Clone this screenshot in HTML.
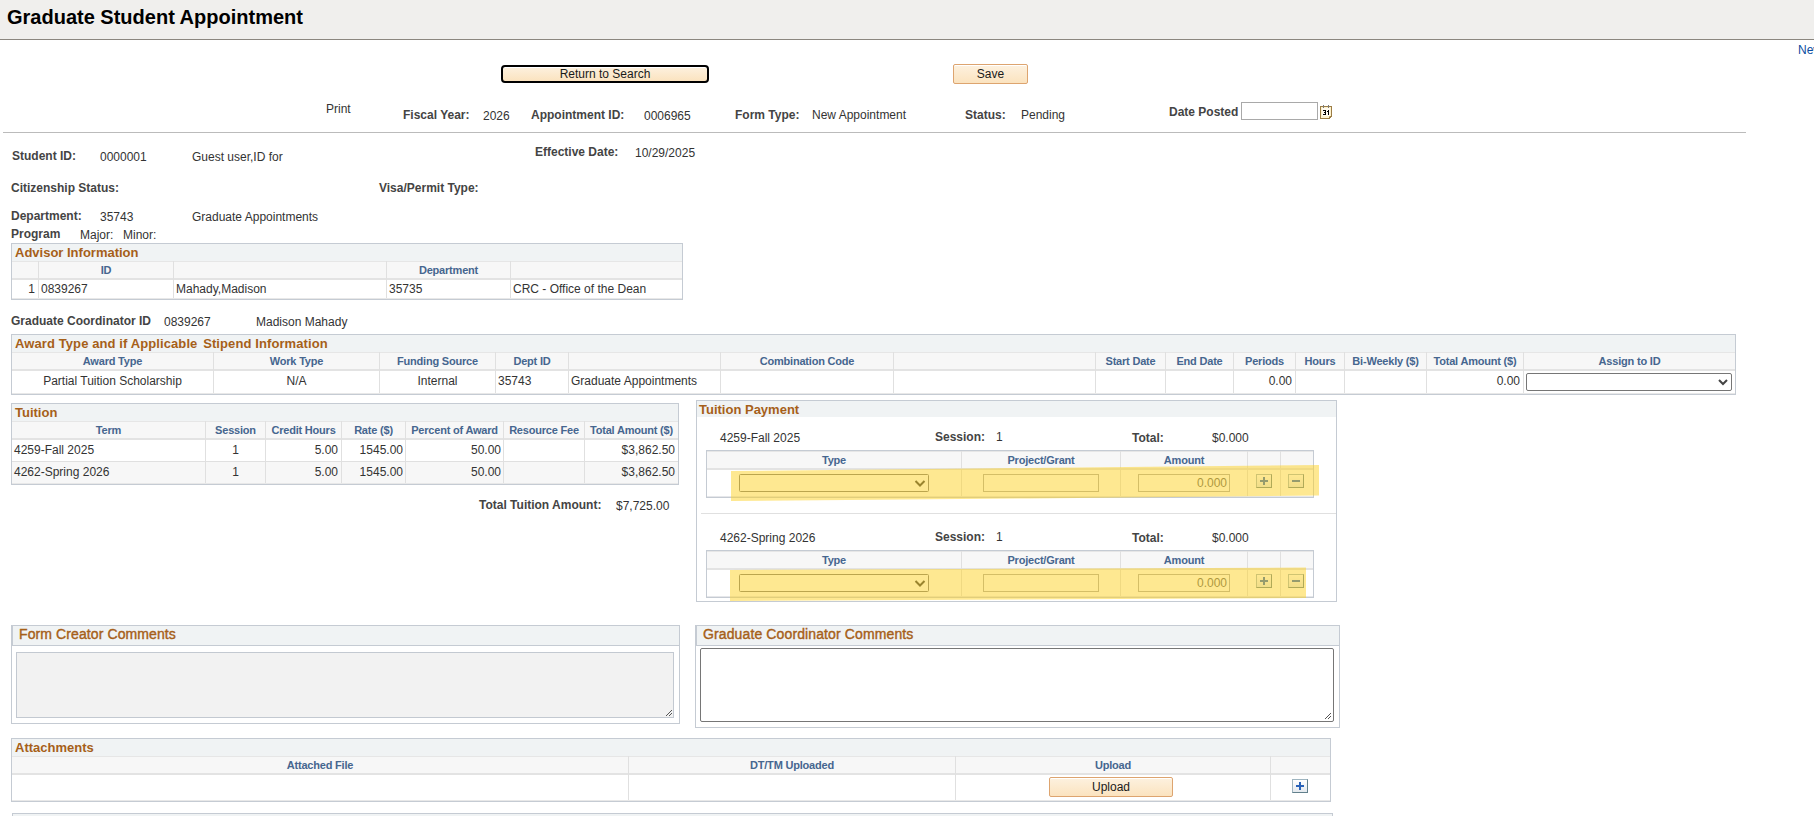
<!DOCTYPE html>
<html><head><meta charset="utf-8">
<style>
*{box-sizing:border-box;margin:0;padding:0}
html,body{width:1814px;height:816px;overflow:hidden;background:#fff}
body{position:relative;font-family:"Liberation Sans",sans-serif;font-size:12px;color:#333}
.a{position:absolute;white-space:nowrap;line-height:14px}
.p{position:absolute}
.btn{position:absolute;border:1px solid #dda46f;border-radius:2px;box-shadow:inset 0 1px 0 #fff;background:linear-gradient(#fdf1df,#fbe3bf);color:#1a1a1a;text-align:center;white-space:nowrap}
</style></head><body>

<div class="p" style="left:0px;top:0px;width:1814px;height:39px;background:#f0efed;"></div>
<div class="p" style="left:0px;top:39px;width:1814px;height:1px;background:#8b867f;"></div>
<div class="a" style="left:7px;top:5px;line-height:24px;font-size:20px;font-weight:bold;color:#000;">Graduate Student Appointment</div>
<div class="a" style="left:1798px;top:43px;line-height:14px;color:#0a4ca0;">New</div>
<div class="btn" style="left:501px;top:65px;width:208px;height:18px;border:2px solid #000;border-radius:4px;line-height:15px">Return to Search</div>
<div class="btn" style="left:953px;top:64px;width:75px;height:20px;line-height:18px">Save</div>
<div class="a" style="left:326px;top:102px;line-height:14px;">Print</div>
<div class="a" style="left:403px;top:108px;line-height:14px;font-weight:bold;color:#444;">Fiscal Year:</div>
<div class="a" style="left:483px;top:109px;line-height:14px;">2026</div>
<div class="a" style="left:531px;top:108px;line-height:14px;font-weight:bold;color:#444;">Appointment ID:</div>
<div class="a" style="left:644px;top:109px;line-height:14px;">0006965</div>
<div class="a" style="left:735px;top:108px;line-height:14px;font-weight:bold;color:#444;">Form Type:</div>
<div class="a" style="left:812px;top:108px;line-height:14px;">New Appointment</div>
<div class="a" style="left:965px;top:108px;line-height:14px;font-weight:bold;color:#444;">Status:</div>
<div class="a" style="left:1021px;top:108px;line-height:14px;">Pending</div>
<div class="a" style="left:1169px;top:105px;line-height:14px;font-weight:bold;color:#444;">Date Posted</div>
<div class="p" style="left:1241px;top:102px;width:77px;height:18px;background:#fff;border:1px solid #a9a9a9;"></div>
<svg class="p" style="left:1320px;top:105px" width="12" height="14" viewBox="0 0 12 14" shape-rendering="crispEdges">
<path d="M0 1h12v11h-1v1h-1v1h-10z" fill="#9c7d45"/>
<path d="M1 2h10v9h-2v2h-8z" fill="#fdf1cc"/>
<rect x="2" y="3" width="8" height="8" fill="#fffaf0"/>
<rect x="3" y="0" width="1" height="3" fill="#7a7a7a"/><rect x="8" y="0" width="1" height="3" fill="#7a7a7a"/>
<rect x="3" y="5" width="3" height="1" fill="#000"/><rect x="5" y="6" width="1" height="1" fill="#000"/><rect x="4" y="7" width="2" height="1" fill="#000"/><rect x="5" y="8" width="1" height="1" fill="#000"/><rect x="3" y="9" width="3" height="1" fill="#000"/>
<rect x="8" y="5" width="1" height="5" fill="#000"/><rect x="7" y="6" width="1" height="1" fill="#000"/>
<rect x="9" y="11" width="1" height="1" fill="#c9b27a"/>
</svg>
<div class="p" style="left:3px;top:132px;width:1743px;height:1px;background:#bbbbbb;"></div>
<div class="a" style="left:12px;top:149px;line-height:14px;font-weight:bold;color:#444;">Student ID:</div>
<div class="a" style="left:100px;top:150px;line-height:14px;">0000001</div>
<div class="a" style="left:192px;top:150px;line-height:14px;">Guest user,ID for</div>
<div class="a" style="left:535px;top:145px;line-height:14px;font-weight:bold;color:#444;">Effective Date:</div>
<div class="a" style="left:635px;top:146px;line-height:14px;">10/29/2025</div>
<div class="a" style="left:11px;top:181px;line-height:14px;font-weight:bold;color:#444;">Citizenship Status:</div>
<div class="a" style="left:379px;top:181px;line-height:14px;font-weight:bold;color:#444;">Visa/Permit Type:</div>
<div class="a" style="left:11px;top:209px;line-height:14px;font-weight:bold;color:#444;">Department:</div>
<div class="a" style="left:100px;top:210px;line-height:14px;">35743</div>
<div class="a" style="left:192px;top:210px;line-height:14px;">Graduate Appointments</div>
<div class="a" style="left:11px;top:227px;line-height:14px;font-weight:bold;color:#444;">Program</div>
<div class="a" style="left:80px;top:228px;line-height:14px;">Major:</div>
<div class="a" style="left:123px;top:228px;line-height:14px;">Minor:</div>
<div class="p" style="left:11px;top:243px;width:672px;height:57px;background:#fff;border:1px solid #c5cbd3;"></div>
<div class="p" style="left:12px;top:244px;width:670px;height:17px;background:#f0f3f4;"></div>
<div class="a" style="left:15px;top:245px;line-height:15px;font-size:13px;font-weight:bold;color:#a65f19;">Advisor Information</div>
<div class="p" style="left:12px;top:261px;width:670px;height:17px;background:#f7f7f7;"></div>
<div class="p" style="left:12px;top:261px;width:670px;height:1px;background:#e6e6e6;"></div>
<div class="p" style="left:12px;top:278px;width:670px;height:2px;background:#e3e3e3;"></div>
<div class="p" style="left:12px;top:298px;width:670px;height:1px;background:#e8e8e8;"></div>
<div class="p" style="left:38px;top:261px;width:1px;height:37px;background:#e0e0e0;"></div>
<div class="p" style="left:173px;top:261px;width:1px;height:37px;background:#e0e0e0;"></div>
<div class="p" style="left:386px;top:261px;width:1px;height:37px;background:#e0e0e0;"></div>
<div class="p" style="left:510px;top:261px;width:1px;height:37px;background:#e0e0e0;"></div>
<div class="a" style="left:39px;top:263px;line-height:14px;font-size:11px;font-weight:bold;color:#46668f;width:134px;text-align:center;letter-spacing:-0.2px;">ID</div>
<div class="a" style="left:387px;top:263px;line-height:14px;font-size:11px;font-weight:bold;color:#46668f;width:123px;text-align:center;letter-spacing:-0.2px;">Department</div>
<div class="a" style="left:12px;top:282px;line-height:14px;width:23px;text-align:right;">1</div>
<div class="a" style="left:41px;top:282px;line-height:14px;">0839267</div>
<div class="a" style="left:176px;top:282px;line-height:14px;">Mahady,Madison</div>
<div class="a" style="left:389px;top:282px;line-height:14px;">35735</div>
<div class="a" style="left:513px;top:282px;line-height:14px;">CRC - Office of the Dean</div>
<div class="a" style="left:11px;top:314px;line-height:14px;font-weight:bold;color:#444;">Graduate Coordinator ID</div>
<div class="a" style="left:164px;top:315px;line-height:14px;">0839267</div>
<div class="a" style="left:256px;top:315px;line-height:14px;">Madison Mahady</div>
<div class="p" style="left:11px;top:334px;width:1725px;height:61px;background:#fff;border:1px solid #c5cbd3;"></div>
<div class="p" style="left:12px;top:335px;width:1723px;height:17px;background:#f0f3f4;"></div>
<div class="a" style="left:15px;top:336px;line-height:15px;font-size:13px;font-weight:bold;color:#a65f19;"><span style="letter-spacing:0.1px">Award Type and if Applicable <span style="margin-left:2px">Stipend Information</span></span></div>
<div class="p" style="left:12px;top:352px;width:1723px;height:17px;background:#f7f7f7;"></div>
<div class="p" style="left:12px;top:352px;width:1723px;height:1px;background:#e6e6e6;"></div>
<div class="p" style="left:12px;top:369px;width:1723px;height:2px;background:#e3e3e3;"></div>
<div class="p" style="left:12px;top:393px;width:1723px;height:1px;background:#e8e8e8;"></div>
<div class="p" style="left:213px;top:352px;width:1px;height:41px;background:#e0e0e0;"></div>
<div class="p" style="left:379px;top:352px;width:1px;height:41px;background:#e0e0e0;"></div>
<div class="p" style="left:495px;top:352px;width:1px;height:41px;background:#e0e0e0;"></div>
<div class="p" style="left:568px;top:352px;width:1px;height:41px;background:#e0e0e0;"></div>
<div class="p" style="left:720px;top:352px;width:1px;height:41px;background:#e0e0e0;"></div>
<div class="p" style="left:893px;top:352px;width:1px;height:41px;background:#e0e0e0;"></div>
<div class="p" style="left:1095px;top:352px;width:1px;height:41px;background:#e0e0e0;"></div>
<div class="p" style="left:1165px;top:352px;width:1px;height:41px;background:#e0e0e0;"></div>
<div class="p" style="left:1233px;top:352px;width:1px;height:41px;background:#e0e0e0;"></div>
<div class="p" style="left:1295px;top:352px;width:1px;height:41px;background:#e0e0e0;"></div>
<div class="p" style="left:1344px;top:352px;width:1px;height:41px;background:#e0e0e0;"></div>
<div class="p" style="left:1426px;top:352px;width:1px;height:41px;background:#e0e0e0;"></div>
<div class="p" style="left:1523px;top:352px;width:1px;height:41px;background:#e0e0e0;"></div>
<div class="a" style="left:12px;top:354px;line-height:14px;font-size:11px;font-weight:bold;color:#46668f;width:201px;text-align:center;letter-spacing:-0.2px;">Award Type</div>
<div class="a" style="left:214px;top:354px;line-height:14px;font-size:11px;font-weight:bold;color:#46668f;width:165px;text-align:center;letter-spacing:-0.2px;">Work Type</div>
<div class="a" style="left:380px;top:354px;line-height:14px;font-size:11px;font-weight:bold;color:#46668f;width:115px;text-align:center;letter-spacing:-0.2px;">Funding Source</div>
<div class="a" style="left:496px;top:354px;line-height:14px;font-size:11px;font-weight:bold;color:#46668f;width:72px;text-align:center;letter-spacing:-0.2px;">Dept ID</div>
<div class="a" style="left:721px;top:354px;line-height:14px;font-size:11px;font-weight:bold;color:#46668f;width:172px;text-align:center;letter-spacing:-0.2px;">Combination Code</div>
<div class="a" style="left:1096px;top:354px;line-height:14px;font-size:11px;font-weight:bold;color:#46668f;width:69px;text-align:center;letter-spacing:-0.2px;">Start Date</div>
<div class="a" style="left:1166px;top:354px;line-height:14px;font-size:11px;font-weight:bold;color:#46668f;width:67px;text-align:center;letter-spacing:-0.2px;">End Date</div>
<div class="a" style="left:1234px;top:354px;line-height:14px;font-size:11px;font-weight:bold;color:#46668f;width:61px;text-align:center;letter-spacing:-0.2px;">Periods</div>
<div class="a" style="left:1296px;top:354px;line-height:14px;font-size:11px;font-weight:bold;color:#46668f;width:48px;text-align:center;letter-spacing:-0.2px;">Hours</div>
<div class="a" style="left:1345px;top:354px;line-height:14px;font-size:11px;font-weight:bold;color:#46668f;width:81px;text-align:center;letter-spacing:-0.2px;">Bi-Weekly ($)</div>
<div class="a" style="left:1427px;top:354px;line-height:14px;font-size:11px;font-weight:bold;color:#46668f;width:96px;text-align:center;letter-spacing:-0.2px;">Total Amount ($)</div>
<div class="a" style="left:1524px;top:354px;line-height:14px;font-size:11px;font-weight:bold;color:#46668f;width:211px;text-align:center;letter-spacing:-0.2px;">Assign to ID</div>
<div class="a" style="left:12px;top:374px;line-height:14px;width:201px;text-align:center;">Partial Tuition Scholarship</div>
<div class="a" style="left:214px;top:374px;line-height:14px;width:165px;text-align:center;">N/A</div>
<div class="a" style="left:380px;top:374px;line-height:14px;width:115px;text-align:center;">Internal</div>
<div class="a" style="left:498px;top:374px;line-height:14px;">35743</div>
<div class="a" style="left:571px;top:374px;line-height:14px;">Graduate Appointments</div>
<div class="a" style="left:1234px;top:374px;line-height:14px;width:58px;text-align:right;">0.00</div>
<div class="a" style="left:1427px;top:374px;line-height:14px;width:93px;text-align:right;">0.00</div>
<div class="p" style="left:1526px;top:373px;width:206px;height:18px;background:#fff;border:1px solid #767676;border-radius:2px;"></div>
<svg class="p" style="left:1717px;top:377px" width="12" height="9" viewBox="0 0 12 9"><path d="M2 3l4 4 4-4" fill="none" stroke="#444" stroke-width="2"/></svg>
<div class="p" style="left:11px;top:403px;width:668px;height:82px;background:#fff;border:1px solid #c5cbd3;"></div>
<div class="p" style="left:12px;top:404px;width:666px;height:17px;background:#f0f3f4;"></div>
<div class="a" style="left:15px;top:405px;line-height:15px;font-size:13px;font-weight:bold;color:#a65f19;">Tuition</div>
<div class="p" style="left:12px;top:421px;width:666px;height:17px;background:#f7f7f7;"></div>
<div class="p" style="left:12px;top:421px;width:666px;height:1px;background:#e6e6e6;"></div>
<div class="p" style="left:12px;top:438px;width:666px;height:2px;background:#e3e3e3;"></div>
<div class="p" style="left:12px;top:462px;width:666px;height:21px;background:#f7f7f7;"></div>
<div class="p" style="left:12px;top:483px;width:666px;height:1px;background:#e8e8e8;"></div>
<div class="p" style="left:205px;top:421px;width:1px;height:62px;background:#e0e0e0;"></div>
<div class="p" style="left:265px;top:421px;width:1px;height:62px;background:#e0e0e0;"></div>
<div class="p" style="left:341px;top:421px;width:1px;height:62px;background:#e0e0e0;"></div>
<div class="p" style="left:405px;top:421px;width:1px;height:62px;background:#e0e0e0;"></div>
<div class="p" style="left:503px;top:421px;width:1px;height:62px;background:#e0e0e0;"></div>
<div class="p" style="left:584px;top:421px;width:1px;height:62px;background:#e0e0e0;"></div>
<div class="a" style="left:12px;top:423px;line-height:14px;font-size:11px;font-weight:bold;color:#46668f;width:193px;text-align:center;letter-spacing:-0.2px;">Term</div>
<div class="a" style="left:206px;top:423px;line-height:14px;font-size:11px;font-weight:bold;color:#46668f;width:59px;text-align:center;letter-spacing:-0.2px;">Session</div>
<div class="a" style="left:266px;top:423px;line-height:14px;font-size:11px;font-weight:bold;color:#46668f;width:75px;text-align:center;letter-spacing:-0.2px;">Credit Hours</div>
<div class="a" style="left:342px;top:423px;line-height:14px;font-size:11px;font-weight:bold;color:#46668f;width:63px;text-align:center;letter-spacing:-0.2px;">Rate ($)</div>
<div class="a" style="left:406px;top:423px;line-height:14px;font-size:11px;font-weight:bold;color:#46668f;width:97px;text-align:center;letter-spacing:-0.2px;">Percent of Award</div>
<div class="a" style="left:504px;top:423px;line-height:14px;font-size:11px;font-weight:bold;color:#46668f;width:80px;text-align:center;letter-spacing:-0.2px;">Resource Fee</div>
<div class="a" style="left:585px;top:423px;line-height:14px;font-size:11px;font-weight:bold;color:#46668f;width:93px;text-align:center;letter-spacing:-0.2px;">Total Amount ($)</div>
<div class="p" style="left:12px;top:461px;width:666px;height:1px;background:#e0e0e0;"></div>
<div class="a" style="left:14px;top:443px;line-height:14px;">4259-Fall 2025</div>
<div class="a" style="left:206px;top:443px;line-height:14px;width:59px;text-align:center;">1</div>
<div class="a" style="left:266px;top:443px;line-height:14px;width:72px;text-align:right;">5.00</div>
<div class="a" style="left:342px;top:443px;line-height:14px;width:61px;text-align:right;">1545.00</div>
<div class="a" style="left:406px;top:443px;line-height:14px;width:95px;text-align:right;">50.00</div>
<div class="a" style="left:585px;top:443px;line-height:14px;width:90px;text-align:right;">$3,862.50</div>
<div class="a" style="left:14px;top:465px;line-height:14px;">4262-Spring 2026</div>
<div class="a" style="left:206px;top:465px;line-height:14px;width:59px;text-align:center;">1</div>
<div class="a" style="left:266px;top:465px;line-height:14px;width:72px;text-align:right;">5.00</div>
<div class="a" style="left:342px;top:465px;line-height:14px;width:61px;text-align:right;">1545.00</div>
<div class="a" style="left:406px;top:465px;line-height:14px;width:95px;text-align:right;">50.00</div>
<div class="a" style="left:585px;top:465px;line-height:14px;width:90px;text-align:right;">$3,862.50</div>
<div class="a" style="left:479px;top:498px;line-height:14px;font-weight:bold;color:#444;">Total Tuition Amount:</div>
<div class="a" style="left:616px;top:499px;line-height:14px;">$7,725.00</div>
<div class="p" style="left:696px;top:400px;width:641px;height:202px;background:#fff;border:1px solid #c5cbd3;"></div>
<div class="p" style="left:697px;top:401px;width:639px;height:16px;background:#f0f3f4;"></div>
<div class="a" style="left:699px;top:402px;line-height:15px;font-size:13px;font-weight:bold;color:#a65f19;">Tuition Payment</div>
<div class="p" style="left:701px;top:513px;width:635px;height:1px;background:#e0e0e0;"></div>
<div class="a" style="left:720px;top:431px;line-height:14px;">4259-Fall 2025</div>
<div class="a" style="left:935px;top:430px;line-height:14px;font-weight:bold;color:#444;">Session:</div>
<div class="a" style="left:996px;top:430px;line-height:14px;">1</div>
<div class="a" style="left:1132px;top:431px;line-height:14px;font-weight:bold;color:#444;">Total:</div>
<div class="a" style="left:1212px;top:431px;line-height:14px;">$0.000</div>
<div class="p" style="left:706px;top:450px;width:608px;height:48px;background:#fff;border:1px solid #c5cbd3;"></div>
<div class="p" style="left:707px;top:451px;width:606px;height:17px;background:#f7f7f7;"></div>
<div class="p" style="left:707px;top:451px;width:606px;height:1px;background:#e6e6e6;"></div>
<div class="p" style="left:707px;top:468px;width:606px;height:2px;background:#e3e3e3;"></div>
<div class="p" style="left:707px;top:496px;width:606px;height:1px;background:#e6e7ea;"></div>
<div class="p" style="left:961px;top:451px;width:1px;height:45px;background:#e0e0e0;"></div>
<div class="p" style="left:1120px;top:451px;width:1px;height:45px;background:#e0e0e0;"></div>
<div class="p" style="left:1247px;top:451px;width:1px;height:45px;background:#e0e0e0;"></div>
<div class="p" style="left:1280px;top:451px;width:1px;height:45px;background:#e0e0e0;"></div>
<div class="a" style="left:707px;top:453px;line-height:14px;font-size:11px;font-weight:bold;color:#46668f;width:254px;text-align:center;letter-spacing:-0.2px;">Type</div>
<div class="a" style="left:962px;top:453px;line-height:14px;font-size:11px;font-weight:bold;color:#46668f;width:158px;text-align:center;letter-spacing:-0.2px;">Project/Grant</div>
<div class="a" style="left:1121px;top:453px;line-height:14px;font-size:11px;font-weight:bold;color:#46668f;width:126px;text-align:center;letter-spacing:-0.2px;">Amount</div>
<div class="p" style="left:739px;top:474px;width:190px;height:18px;background:#fff;border:1px solid #767676;border-radius:1.5px;"></div>
<svg class="p" style="left:914px;top:479px" width="12" height="9" viewBox="0 0 12 9"><path d="M1.5 2l4.5 4.5 4.5-4.5" fill="none" stroke="#333" stroke-width="2"/></svg>
<div class="p" style="left:983px;top:474px;width:116px;height:18px;background:#fff;border:1px solid #a9a9a9;"></div>
<div class="p" style="left:1138px;top:474px;width:92px;height:18px;background:#fff;border:1px solid #a9a9a9;"></div>
<div class="a" style="left:1140px;top:476px;line-height:14px;color:#5a5a5a;width:87px;text-align:right;">0.000</div>
<div class="p" style="left:1256px;top:474px;width:16px;height:14px;background:linear-gradient(#ffffff,#e4e9ee);border-style:solid;border-width:1px;border-color:#9fb5c0 #62808c #62808c #9fb5c0;"></div>
<div class="p" style="left:1260px;top:480px;width:8px;height:2px;background:#2a62b8;"></div>
<div class="p" style="left:1263px;top:477px;width:2px;height:8px;background:#2a62b8;"></div>
<div class="p" style="left:1288px;top:474px;width:16px;height:14px;background:linear-gradient(#ffffff,#e4e9ee);border-style:solid;border-width:1px;border-color:#9fb5c0 #62808c #62808c #9fb5c0;"></div>
<div class="p" style="left:1292px;top:480px;width:8px;height:2px;background:#2a62b8;"></div>
<div class="a" style="left:720px;top:531px;line-height:14px;">4262-Spring 2026</div>
<div class="a" style="left:935px;top:530px;line-height:14px;font-weight:bold;color:#444;">Session:</div>
<div class="a" style="left:996px;top:530px;line-height:14px;">1</div>
<div class="a" style="left:1132px;top:531px;line-height:14px;font-weight:bold;color:#444;">Total:</div>
<div class="a" style="left:1212px;top:531px;line-height:14px;">$0.000</div>
<div class="p" style="left:706px;top:550px;width:608px;height:48px;background:#fff;border:1px solid #c5cbd3;"></div>
<div class="p" style="left:707px;top:551px;width:606px;height:17px;background:#f7f7f7;"></div>
<div class="p" style="left:707px;top:551px;width:606px;height:1px;background:#e6e6e6;"></div>
<div class="p" style="left:707px;top:568px;width:606px;height:2px;background:#e3e3e3;"></div>
<div class="p" style="left:707px;top:596px;width:606px;height:1px;background:#e6e7ea;"></div>
<div class="p" style="left:961px;top:551px;width:1px;height:45px;background:#e0e0e0;"></div>
<div class="p" style="left:1120px;top:551px;width:1px;height:45px;background:#e0e0e0;"></div>
<div class="p" style="left:1247px;top:551px;width:1px;height:45px;background:#e0e0e0;"></div>
<div class="p" style="left:1280px;top:551px;width:1px;height:45px;background:#e0e0e0;"></div>
<div class="a" style="left:707px;top:553px;line-height:14px;font-size:11px;font-weight:bold;color:#46668f;width:254px;text-align:center;letter-spacing:-0.2px;">Type</div>
<div class="a" style="left:962px;top:553px;line-height:14px;font-size:11px;font-weight:bold;color:#46668f;width:158px;text-align:center;letter-spacing:-0.2px;">Project/Grant</div>
<div class="a" style="left:1121px;top:553px;line-height:14px;font-size:11px;font-weight:bold;color:#46668f;width:126px;text-align:center;letter-spacing:-0.2px;">Amount</div>
<div class="p" style="left:739px;top:574px;width:190px;height:18px;background:#fff;border:1px solid #767676;border-radius:1.5px;"></div>
<svg class="p" style="left:914px;top:579px" width="12" height="9" viewBox="0 0 12 9"><path d="M1.5 2l4.5 4.5 4.5-4.5" fill="none" stroke="#333" stroke-width="2"/></svg>
<div class="p" style="left:983px;top:574px;width:116px;height:18px;background:#fff;border:1px solid #a9a9a9;"></div>
<div class="p" style="left:1138px;top:574px;width:92px;height:18px;background:#fff;border:1px solid #a9a9a9;"></div>
<div class="a" style="left:1140px;top:576px;line-height:14px;color:#5a5a5a;width:87px;text-align:right;">0.000</div>
<div class="p" style="left:1256px;top:574px;width:16px;height:14px;background:linear-gradient(#ffffff,#e4e9ee);border-style:solid;border-width:1px;border-color:#9fb5c0 #62808c #62808c #9fb5c0;"></div>
<div class="p" style="left:1260px;top:580px;width:8px;height:2px;background:#2a62b8;"></div>
<div class="p" style="left:1263px;top:577px;width:2px;height:8px;background:#2a62b8;"></div>
<div class="p" style="left:1288px;top:574px;width:16px;height:14px;background:linear-gradient(#ffffff,#e4e9ee);border-style:solid;border-width:1px;border-color:#9fb5c0 #62808c #62808c #9fb5c0;"></div>
<div class="p" style="left:1292px;top:580px;width:8px;height:2px;background:#2a62b8;"></div>
<svg class="p" style="left:0;top:0" width="1814" height="816"><polygon points="731,471 1030,468 1319,465 1319,495.5 1030,498.5 731,501" fill="rgba(253,210,39,0.51)"/><polygon points="730,570 1306,567.5 1306,598 730,601" fill="rgba(253,210,39,0.51)"/></svg>
<div class="p" style="left:11px;top:625px;width:669px;height:99px;background:#fff;border:1px solid #c5cbd3;"></div>
<div class="p" style="left:12px;top:626px;width:667px;height:20px;background:#f0f3f4;border-left:1px solid #c5cbd3;border-bottom:1px solid #c5cbd3;"></div>
<div class="a" style="left:19px;top:626px;line-height:16px;font-size:14px;color:#a65f19;-webkit-text-stroke:0.4px #a65f19;letter-spacing:0.1px;">Form Creator Comments</div>
<div class="p" style="left:16px;top:652px;width:658px;height:66px;background:#f2f2f2;border:1px solid #c3c9d1;"></div>
<svg class="p" style="left:665px;top:709px" width="8" height="8" viewBox="0 0 8 8"><path d="M7 1L1 7M7 4L4 7" stroke="#555" stroke-width="1"/></svg>
<div class="p" style="left:695px;top:625px;width:645px;height:103px;background:#fff;border:1px solid #c5cbd3;"></div>
<div class="p" style="left:696px;top:626px;width:643px;height:20px;background:#f0f3f4;border-left:1px solid #c5cbd3;border-bottom:1px solid #c5cbd3;"></div>
<div class="a" style="left:703px;top:626px;line-height:16px;font-size:14px;color:#a65f19;-webkit-text-stroke:0.4px #a65f19;letter-spacing:0.12px;">Graduate Coordinator Comments</div>
<div class="p" style="left:700px;top:648px;width:634px;height:74px;background:#fff;border:1px solid #767676;border-radius:2px;"></div>
<svg class="p" style="left:1324px;top:712px" width="8" height="8" viewBox="0 0 8 8"><path d="M7 1L1 7M7 4L4 7" stroke="#555" stroke-width="1"/></svg>
<div class="p" style="left:11px;top:738px;width:1320px;height:64px;background:#fff;border:1px solid #c5cbd3;"></div>
<div class="p" style="left:12px;top:739px;width:1318px;height:17px;background:#f0f3f4;"></div>
<div class="a" style="left:15px;top:740px;line-height:15px;font-size:13px;font-weight:bold;color:#a65f19;">Attachments</div>
<div class="p" style="left:12px;top:756px;width:1318px;height:17px;background:#f7f7f7;"></div>
<div class="p" style="left:12px;top:756px;width:1318px;height:1px;background:#e6e6e6;"></div>
<div class="p" style="left:12px;top:773px;width:1318px;height:2px;background:#e3e3e3;"></div>
<div class="p" style="left:12px;top:800px;width:1318px;height:1px;background:#e8e8e8;"></div>
<div class="p" style="left:628px;top:756px;width:1px;height:44px;background:#e0e0e0;"></div>
<div class="p" style="left:955px;top:756px;width:1px;height:44px;background:#e0e0e0;"></div>
<div class="p" style="left:1270px;top:756px;width:1px;height:44px;background:#e0e0e0;"></div>
<div class="a" style="left:12px;top:758px;line-height:14px;font-size:11px;font-weight:bold;color:#46668f;width:616px;text-align:center;letter-spacing:-0.2px;">Attached File</div>
<div class="a" style="left:629px;top:758px;line-height:14px;font-size:11px;font-weight:bold;color:#46668f;width:326px;text-align:center;letter-spacing:-0.2px;">DT/TM Uploaded</div>
<div class="a" style="left:956px;top:758px;line-height:14px;font-size:11px;font-weight:bold;color:#46668f;width:314px;text-align:center;letter-spacing:-0.2px;">Upload</div>
<div class="btn" style="left:1049px;top:777px;width:124px;height:20px;line-height:18px">Upload</div>
<div class="p" style="left:1292px;top:779px;width:16px;height:14px;background:linear-gradient(#ffffff,#e4e9ee);border-style:solid;border-width:1px;border-color:#9fb5c0 #62808c #62808c #9fb5c0;"></div>
<div class="p" style="left:1296px;top:785px;width:8px;height:2px;background:#2a62b8;"></div>
<div class="p" style="left:1299px;top:782px;width:2px;height:8px;background:#2a62b8;"></div>
<div class="p" style="left:12px;top:813px;width:1321px;height:18px;background:#f0f3f4;border:1px solid #c5cbd3;"></div>
</body></html>
